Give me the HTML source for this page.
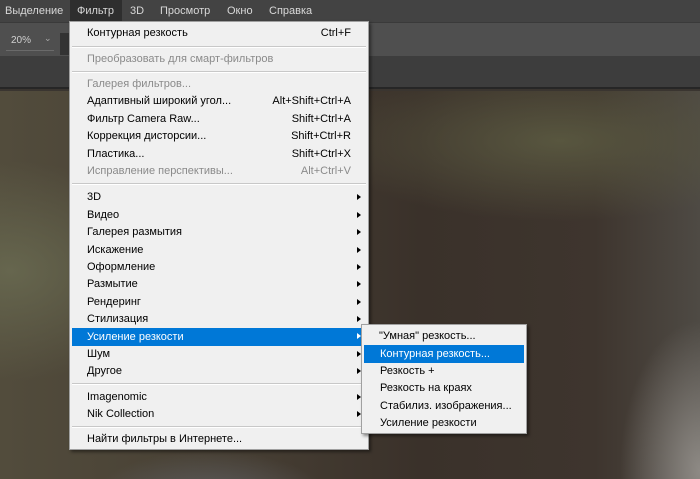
<!DOCTYPE html>
<html><head><meta charset="utf-8"><style>
*{margin:0;padding:0;box-sizing:border-box}
body{width:700px;height:479px;overflow:hidden;position:relative;font-family:"Liberation Sans",sans-serif;font-size:11px;background:#3a3530}
.mb{position:absolute;left:0;top:0;width:700px;height:22px;background:#434343;color:#d8d8d8}
.mb span{position:absolute;top:5px}
.tb{position:absolute;left:0;top:22px;width:700px;height:34px;background:#4f4f4f;border-top:1px solid #3a3a3a}
.st{position:absolute;left:0;top:56px;width:700px;height:33px;background:#3d3d3d;border-bottom:2px solid #262626}
.photo{position:absolute;left:0;top:91px;width:700px;height:388px;
background:radial-gradient(ellipse 160px 110px at 10px 180px,#66664e 0%,rgba(100,95,75,0) 100%),
radial-gradient(ellipse 240px 80px at 560px 50px,#58563f 0%,rgba(90,85,60,0) 100%),
radial-gradient(ellipse 80px 150px at 700px 380px,#8e8a85 0%,rgba(150,150,145,0) 100%),
radial-gradient(ellipse 120px 50px at 210px 410px,#5e5e60 0%,rgba(110,110,110,0) 100%),
linear-gradient(90deg,#524c3c 0%,#463e33 35%,#3a312a 60%,#3e352e 85%,#4e4a44 100%)}
.menu{position:absolute;background:#f0f0f0;border:1px solid #a0a0a0;box-shadow:2px 2px 3px rgba(0,0,0,.45);color:#000}
.it{position:absolute;left:0;right:0;height:17px;line-height:17px}
.it .t{position:absolute;left:17px}
.it .k{position:absolute;right:17px}
.it .a{position:absolute;right:7px;top:5px;width:0;height:0;border-left:4px solid #000;border-top:3.5px solid transparent;border-bottom:3.5px solid transparent}
.dis{color:#8a8a8a}
.hl{background:#0078d7;color:#fff;left:2px;right:2px}
.hl .a{border-left-color:#fff}
.sep{position:absolute;left:2px;right:2px;height:2px;border-top:1px solid #c8c8c8;border-bottom:1px solid #fff}
</style></head><body>
<div class="mb">
<span style="left:5px">Выделение</span>
<div style="position:absolute;left:70px;top:0;width:52px;height:22px;background:#2e2e2e"></div>
<span style="left:77px">Фильтр</span>
<span style="left:130px">3D</span>
<span style="left:160px">Просмотр</span>
<span style="left:227px">Окно</span>
<span style="left:269px">Справка</span>
</div>
<div class="tb">
<span style="position:absolute;left:11px;top:12px;color:#d0d0d0;font-size:10px">20%</span>
<span style="position:absolute;left:44px;top:10px;color:#aaa;font-size:9px">⌄</span>
<div style="position:absolute;left:6px;top:27px;width:48px;height:1px;background:#6a6a6a"></div>
<div style="position:absolute;left:60px;top:10px;width:12px;height:22px;background:#333"></div>
</div>
<div class="st"></div>
<div class="photo"></div>

<div class="menu" style="left:69px;top:21px;width:300px;height:429px">
<div class="it" style="top:3px"><span class="t">Контурная резкость</span><span class="k">Ctrl+F</span></div>
<div class="sep" style="top:24px"></div>
<div class="it dis" style="top:29px"><span class="t">Преобразовать для смарт-фильтров</span></div>
<div class="sep" style="top:49px"></div>
<div class="it dis" style="top:54px"><span class="t">Галерея фильтров...</span></div>
<div class="it" style="top:71px"><span class="t">Адаптивный широкий угол...</span><span class="k">Alt+Shift+Ctrl+A</span></div>
<div class="it" style="top:89px"><span class="t">Фильтр Camera Raw...</span><span class="k">Shift+Ctrl+A</span></div>
<div class="it" style="top:106px"><span class="t">Коррекция дисторсии...</span><span class="k">Shift+Ctrl+R</span></div>
<div class="it" style="top:124px"><span class="t">Пластика...</span><span class="k">Shift+Ctrl+X</span></div>
<div class="it dis" style="top:141px"><span class="t">Исправление перспективы...</span><span class="k">Alt+Ctrl+V</span></div>
<div class="sep" style="top:161px"></div>
<div class="it" style="top:167px"><span class="t">3D</span><span class="a"></span></div>
<div class="it" style="top:185px"><span class="t">Видео</span><span class="a"></span></div>
<div class="it" style="top:202px"><span class="t">Галерея размытия</span><span class="a"></span></div>
<div class="it" style="top:220px"><span class="t">Искажение</span><span class="a"></span></div>
<div class="it" style="top:237px"><span class="t">Оформление</span><span class="a"></span></div>
<div class="it" style="top:254px"><span class="t">Размытие</span><span class="a"></span></div>
<div class="it" style="top:272px"><span class="t">Рендеринг</span><span class="a"></span></div>
<div class="it" style="top:289px"><span class="t">Стилизация</span><span class="a"></span></div>
<div class="it hl" style="top:306px;height:18px;line-height:18px"><span class="t" style="left:15px">Усиление резкости</span><span class="a" style="right:5px"></span></div>
<div class="it" style="top:324px"><span class="t">Шум</span><span class="a"></span></div>
<div class="it" style="top:341px"><span class="t">Другое</span><span class="a"></span></div>
<div class="sep" style="top:361px"></div>
<div class="it" style="top:367px"><span class="t">Imagenomic</span><span class="a"></span></div>
<div class="it" style="top:384px"><span class="t">Nik Collection</span><span class="a"></span></div>
<div class="sep" style="top:404px"></div>
<div class="it" style="top:409px"><span class="t">Найти фильтры в Интернете...</span></div>
</div>

<div class="menu" style="left:361px;top:324px;width:166px;height:110px">
<div class="it" style="top:3px"><span class="t">"Умная" резкость...</span></div>
<div class="it hl" style="top:20px;height:18px;line-height:18px"><span class="t" style="left:16px">Контурная резкость...</span></div>
<div class="it" style="top:38px"><span class="t" style="left:18px">Резкость +</span></div>
<div class="it" style="top:55px"><span class="t" style="left:18px">Резкость на краях</span></div>
<div class="it" style="top:73px"><span class="t" style="left:18px">Стабилиз. изображения...</span></div>
<div class="it" style="top:90px"><span class="t" style="left:18px">Усиление резкости</span></div>
</div>
</body></html>
